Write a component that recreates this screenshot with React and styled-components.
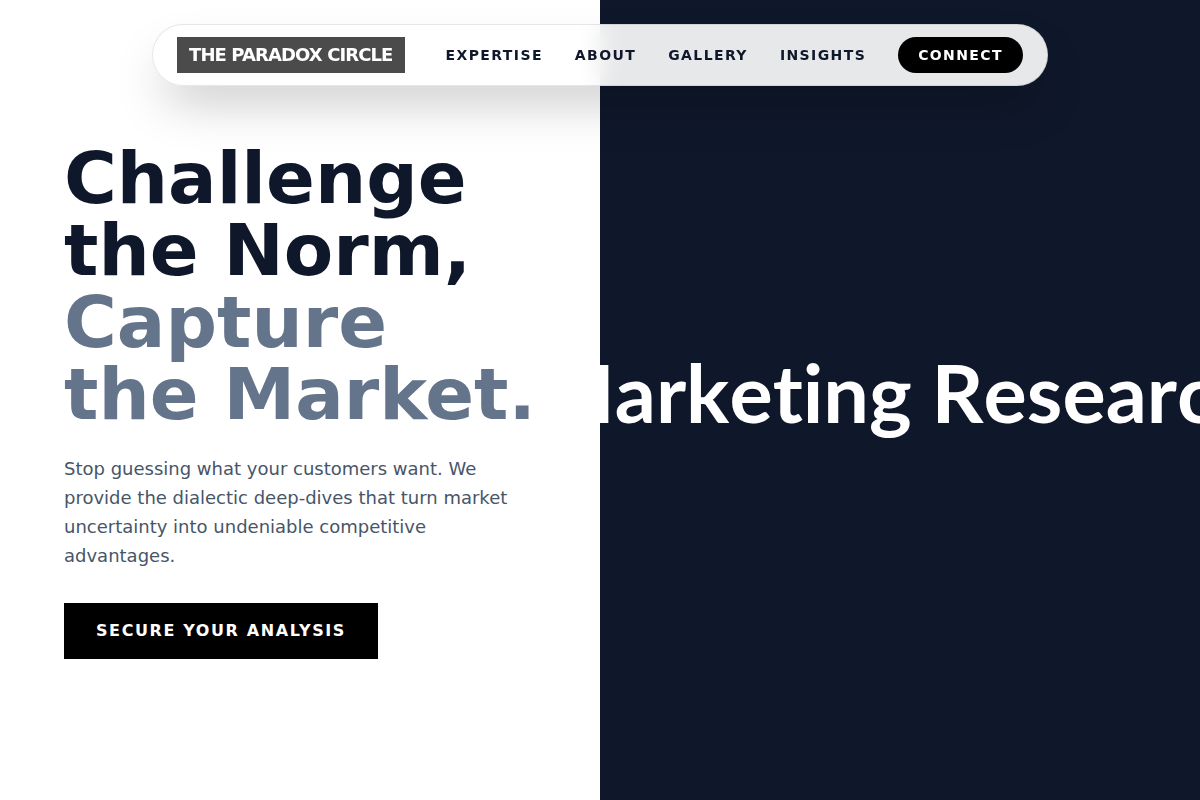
import styled, { createGlobalStyle } from "styled-components";

const GlobalStyle = createGlobalStyle`
  * {
    box-sizing: border-box;
  }
  body {
    margin: 0;
    background-color: #fff;
    color: #0f172a;
    font-family: "DejaVu Sans", sans-serif;
  }
`;

const Header = styled.header`
  position: fixed;
  top: 24px;
  left: 0;
  right: 0;
  z-index: 10;
  display: flex;
  justify-content: center;
`;

const Nav = styled.nav`
  display: flex;
  align-items: center;
  gap: 32px;
  padding: 12px 24px;
  border: 1px solid rgba(15, 23, 42, 0.1);
  border-radius: 999px;
  background-color: rgba(255, 255, 255, 0.9);
  backdrop-filter: blur(12px);
  box-shadow: 0 25px 50px -12px rgba(0, 0, 0, 0.25);
`;

const Logo = styled.a`
  margin-right: 9px;
  padding: 4px 12px;
  background-color: #4b4b4b;
  color: #fff;
  font-size: 18px;
  font-weight: 700;
  line-height: 28px;
  letter-spacing: -0.05em;
  text-decoration: none;
  white-space: nowrap;
`;

const NavLink = styled.a`
  color: #0f172a;
  font-size: 14px;
  font-weight: 700;
  line-height: 20px;
  letter-spacing: 0.1em;
  text-decoration: none;
`;

const ConnectLink = styled(NavLink)`
  padding: 8px 20px;
  border-radius: 999px;
  background-color: #000;
  color: #fff;
`;

const Hero = styled.main`
  display: grid;
  grid-template-columns: 1fr 1fr;
  min-height: 100vh;
`;

const Copy = styled.section`
  display: flex;
  flex-direction: column;
  align-items: flex-start;
  justify-content: center;
  padding: 64px;
`;

const Title = styled.h1`
  margin: 0 0 24px;
  font-size: 72px;
  font-weight: 700;
  line-height: 1;
  white-space: nowrap;
  span {
    color: #64748b;
  }
`;

const Desc = styled.p`
  max-width: 448px;
  margin: 0 0 32px;
  color: #475569;
  font-size: 18px;
  line-height: 1.625;
`;

const CallToAction = styled.a`
  padding: 16px 32px;
  background-color: #000;
  color: #fff;
  font-size: 16px;
  font-weight: 700;
  line-height: 24px;
  letter-spacing: 0.1em;
  text-decoration: none;
`;

const Visual = styled.section`
  display: flex;
  align-items: center;
  justify-content: center;
  min-width: 0;
  padding-bottom: 16px;
  overflow: hidden;
  background-color: #0f172a;
`;

const VisualText = styled.p`
  flex-shrink: 0;
  margin: 0;
  color: #fff;
  font-family: Lato, sans-serif;
  font-size: 81px;
  font-weight: 700;
  font-kerning: none;
  font-variant-ligatures: none;
  line-height: 100px;
  white-space: nowrap;
`;

const links = ["Expertise", "About", "Gallery", "Insights"];

export default function App() {
  return (
    <>
      <GlobalStyle />
      <Header>
        <Nav>
          <Logo href="#">THE PARADOX CIRCLE</Logo>
          {links.map((link) => (
            <NavLink key={link} href={`#${link.toLowerCase()}`}>
              {link.toUpperCase()}
            </NavLink>
          ))}
          <ConnectLink href="#connect">CONNECT</ConnectLink>
        </Nav>
      </Header>
      <Hero>
        <Copy>
          <Title>
            Challenge
            <br />
            the Norm,
            <br />
            <span>
              Capture
              <br />
              the Market.
            </span>
          </Title>
          <Desc>
            Stop guessing what your customers want. We provide the dialectic
            deep-dives that turn market uncertainty into undeniable competitive
            advantages.
          </Desc>
          <CallToAction href="#connect">SECURE YOUR ANALYSIS</CallToAction>
        </Copy>
        <Visual>
          <VisualText>Marketing Research</VisualText>
        </Visual>
      </Hero>
    </>
  );
}
